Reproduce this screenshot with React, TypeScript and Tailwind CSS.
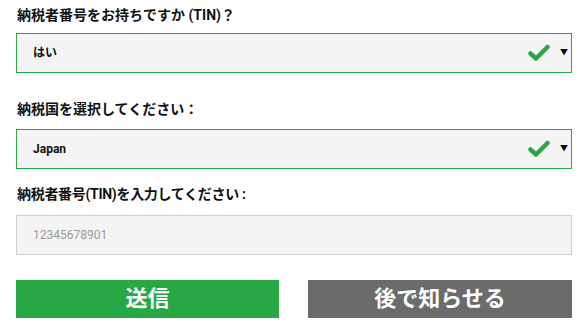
function Check() {
  return (
    <svg width="22" height="18" viewBox="0 0 22 18" className="shrink-0">
      <path d="M2.5 9.5 L8 14.5 L19.5 3" fill="none" stroke="#28a745" strokeWidth="4.5" strokeLinecap="round" strokeLinejoin="round" />
    </svg>
  );
}

function SelectBox({ value }: { value: string }) {
  return (
    <div className="h-[40px] border border-[#28a745] bg-[#f4f4f4] flex items-center pl-[16px] pr-[3px]">
      <span className="flex-1 text-[12px] font-bold text-[#111]">{value}</span>
      <Check />
      <span className="ml-[10px] text-[8px] text-[#111]">▼</span>
    </div>
  );
}

export default function App() {
  return (
    <div
      className="w-[583px] h-[327px] bg-white pl-[16px] pr-[11px] pt-[6px]"
      style={{ fontFamily: 'Roboto, "Noto Sans CJK JP", sans-serif' }}
    >
      <label className="block text-[14px] font-bold text-[#111] leading-[18px] pl-[1px]">
        納税者番号をお持ちですか (TIN)？
      </label>
      <div className="mt-[9px]">
        <SelectBox value="はい" />
      </div>

      <label className="block mt-[27px] text-[14px] font-bold text-[#111] leading-[18px] pl-[1px]">
        納税国を選択してください：
      </label>
      <div className="mt-[11px]">
        <SelectBox value="Japan" />
      </div>

      <label className="block mt-[16px] text-[14px] font-bold text-[#111] leading-[18px] pl-[1px] tracking-[-0.3px]">
        納税者番号(TIN)を入力してください :
      </label>
      <div className="mt-[12px] h-[40px] border border-[#d0d0d0] bg-[#f4f4f4] flex items-center pl-[16px]">
        <span className="text-[12px] text-[#999]">12345678901</span>
      </div>

      <div className="mt-[25px] flex justify-between">
        <button className="w-[263px] h-[38px] bg-[#28a745] text-white text-[22px] font-bold leading-none">送信</button>
        <button className="w-[264px] h-[38px] bg-[#6b6b6b] text-white text-[22px] font-bold leading-none">後で知らせる</button>
      </div>
    </div>
  );
}
